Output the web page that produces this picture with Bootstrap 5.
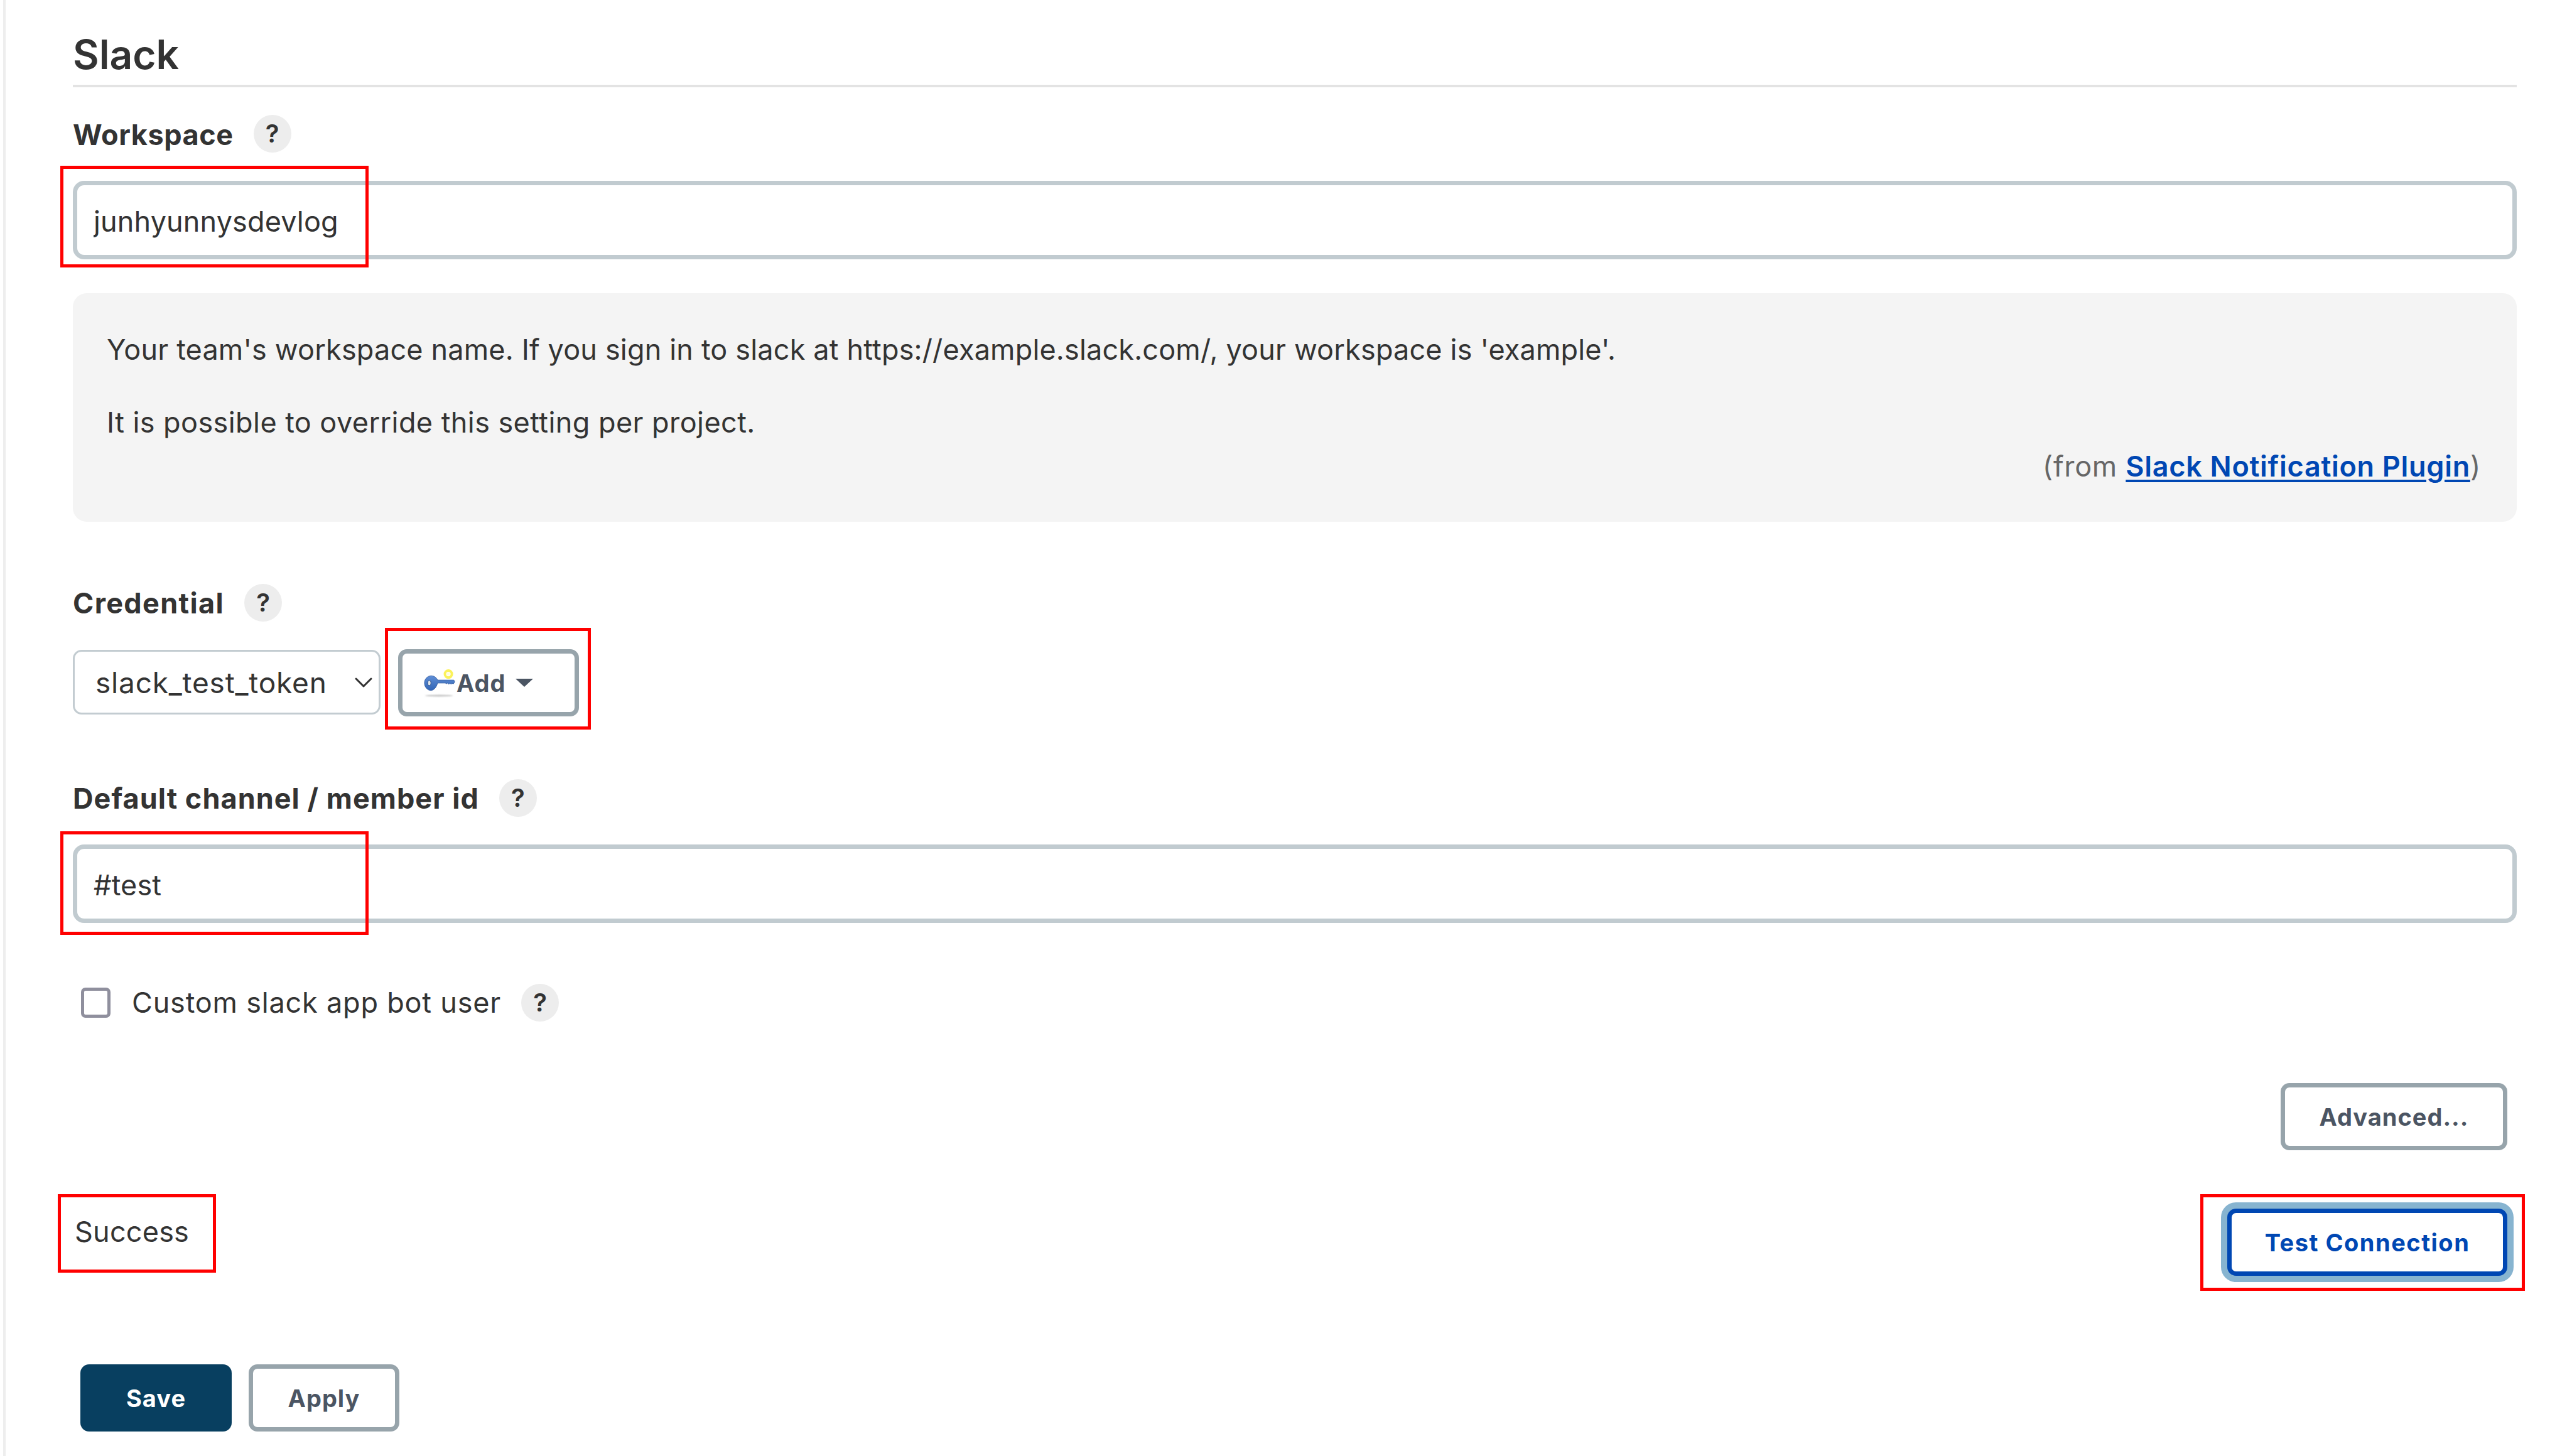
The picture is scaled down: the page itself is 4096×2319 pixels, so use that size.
<!doctype html>
<html lang="en">
<head>
<meta charset="utf-8">
<title>Slack</title>
<link href="https://cdn.jsdelivr.net/npm/bootstrap@5.3.0/dist/css/bootstrap.min.css" rel="stylesheet">
<style>
html,body{height:100%;background:#fff}
body{font-family:Inter,"Liberation Sans",sans-serif;font-size:45px;line-height:60px;color:#333}
.pg{position:relative;min-height:2319px;margin-left:5px;border-left:4px solid #eee;padding:48px 88px 0 107px}
.slack-title{font-size:64px;line-height:78px;font-weight:600;margin:0;padding-bottom:9px;border-bottom:4px solid #e3e3e3;color:#333}
.lbl-row{display:flex;align-items:center;gap:32px;font-weight:700;letter-spacing:.55px}
.lbl-row>span:first-child{padding-top:4px}
.r1{margin-top:42px;margin-bottom:43px}
.r2{margin-top:98px;margin-bottom:43px;letter-spacing:1.35px}
.r3{margin-top:99px;margin-bottom:43px;letter-spacing:1.05px}
.r2>span:first-child,.r3>span:first-child{padding-top:2px}
.qm{flex:none;width:60px;height:60px;border-radius:50%;background:#ededed;display:flex;align-items:center;justify-content:center;font-size:40px;font-weight:600;color:#333;line-height:1;letter-spacing:0}
.tx-in.form-control{height:125px;border:7px solid #c1cbd0;border-radius:18px;font-size:45px;line-height:60px;padding:3px 26px 0;color:#333;box-shadow:none;font-family:inherit;letter-spacing:.15px}
.hlp{margin-top:54px;background:#f4f4f4;border-radius:22px;padding:60px 57px 58px 54px;letter-spacing:.17px}
.hlp p{margin:0 0 56px}
.hlp p.mb-0{letter-spacing:.43px}
.hlp .frm{margin:10px 0 0;text-align:right;color:#666;letter-spacing:.7px}
.hlp a{color:#0047b3;font-weight:600;text-decoration:underline;text-decoration-thickness:4px;text-underline-offset:5px}
.sel-row{display:flex;align-items:flex-start;gap:28px}
.sel-box.form-select{width:490px;height:103px;margin-top:1px;border:3px solid #c3ccd1;border-radius:14px;font-size:46px;line-height:60px;padding:0 40px 0 33px;color:#333;background-image:url("data:image/svg+xml,%3csvg xmlns='http://www.w3.org/2000/svg' viewBox='0 0 16 16'%3e%3cpath fill='none' stroke='%23333' stroke-linecap='round' stroke-linejoin='round' stroke-width='1.5' d='m2 5 6 6 6-6'/%3e%3c/svg%3e");background-size:32px;background-position:right 8px center;font-family:inherit;box-shadow:none;letter-spacing:.8px}
.bt.btn{--bs-btn-font-size:38px;font-weight:700;height:107px;border-radius:14px;border:7px solid #97a4ab;background:#fff;color:#4b5563;padding:0;line-height:1;display:inline-flex;align-items:center;justify-content:center;letter-spacing:1px}
.add-b.btn{width:288px;justify-content:flex-start;padding-left:33px}
.add-b svg{width:52px;height:48px;flex:none;margin-right:1px}
.add-b.dropdown-toggle::after{margin-left:16px;border-top:13px solid #4b5563;border-right:14px solid transparent;border-left:14px solid transparent;border-bottom:0;vertical-align:0}
.chk-row{margin-top:97px;display:flex;align-items:center;padding-left:13px}
.chk-box.form-check-input{width:47px;height:48px;margin:0 34px 0 0;border:5px solid #8f8f9d;border-radius:7px;float:none;flex:none}
.chk-row label{letter-spacing:.8px}
.chk-row .qm{margin-left:32px}
.adv-row{margin-top:98px;display:flex;justify-content:flex-end;padding-right:15px}
.adv-b.btn{width:361px}
.test-row{margin-top:93px;display:flex;justify-content:space-between;align-items:flex-start;padding-right:15px}
.succ{margin:7px 0 0 3px;letter-spacing:.2px}
.test-b.btn{width:446px;border-color:#0047b3;color:#0047b3;box-shadow:0 0 0 10px #87b4d0;letter-spacing:1.5px}
.save-row{margin-top:141px;display:flex;gap:27px;padding-left:12px}
.save-b.btn{width:241px;background:#083f60;border-color:#083f60;color:#fff}
.apply-b.btn{width:240px}
.red{position:absolute;border:5px solid #f00;pointer-events:none}
.red1{left:87px;top:264px;width:491px;height:162px}
.red2{left:604px;top:1000px;width:328px;height:162px}
.red3{left:87px;top:1324px;width:491px;height:165px}
.red4{left:83px;top:1902px;width:252px;height:125px}
.red5{left:3495px;top:1902px;width:517px;height:154px}
</style>
</head>
<body>
<div class="pg">
  <h2 class="slack-title">Slack</h2>
  <div class="lbl-row r1"><span>Workspace</span><span class="qm">?</span></div>
  <input class="form-control tx-in" type="text" value="junhyunnysdevlog" aria-label="Workspace">
  <div class="hlp">
    <p>Your team's workspace name. If you sign in to slack at https://example.slack.com/, your workspace is 'example'.</p>
    <p class="mb-0">It is possible to override this setting per project.</p>
    <div class="frm">(from <a href="#">Slack Notification Plugin</a>)</div>
  </div>
  <div class="lbl-row r2"><span>Credential</span><span class="qm">?</span></div>
  <div class="sel-row">
    <select class="form-select sel-box" aria-label="Credential"><option>slack_test_token</option></select>
    <button type="button" class="btn bt add-b dropdown-toggle">
      <svg viewBox="60 15 165 155" aria-hidden="true">
        <defs>
          <linearGradient id="kg" x1="0" y1="0" x2="0" y2="1"><stop offset="0" stop-color="#5f8ed6"/><stop offset="1" stop-color="#3265b5"/></linearGradient>
          <filter id="bl" x="-20%" y="-100%" width="140%" height="300%"><feGaussianBlur stdDeviation="3"/></filter>
        </defs>
        <ellipse cx="140" cy="157" rx="72" ry="5" fill="#c4c4c4" filter="url(#bl)"/>
        <circle cx="188" cy="46" r="18" fill="none" stroke="#fbf25a" stroke-width="13"/>
        <circle cx="188" cy="46" r="8" fill="#fffde0"/>
        <path d="M100 55c15 0 28 10 32 22h84l4 6-3 10-6 4-4-5-5 6-6-5-6 5-6-6-6 4-6-4h-40c-4 20-18 38-34 38-18 0-33-17-33-38s15-37 35-37z" fill="url(#kg)" stroke="#2f5ba3" stroke-width="3" stroke-linejoin="round"/>
        <ellipse cx="90" cy="92" rx="8" ry="13" fill="#dfe5ea" stroke="#274a85" stroke-width="3"/>
      </svg>Add</button>
  </div>
  <div class="lbl-row r3"><span>Default channel / member id</span><span class="qm">?</span></div>
  <input class="form-control tx-in" type="text" value="#test" aria-label="Default channel">
  <div class="chk-row">
    <input class="form-check-input chk-box" type="checkbox" id="cb" aria-label="Custom slack app bot user">
    <label for="cb">Custom slack app bot user</label>
    <span class="qm">?</span>
  </div>
  <div class="adv-row"><button type="button" class="btn bt adv-b">Advanced...</button></div>
  <div class="test-row">
    <div class="succ">Success</div>
    <button type="button" class="btn bt test-b">Test Connection</button>
  </div>
  <div class="save-row">
    <button type="button" class="btn bt save-b">Save</button>
    <button type="button" class="btn bt apply-b">Apply</button>
  </div>
  <div class="red red1"></div>
  <div class="red red2"></div>
  <div class="red red3"></div>
  <div class="red red4"></div>
  <div class="red red5"></div>
</div>
<script src="https://cdn.jsdelivr.net/npm/bootstrap@5.3.0/dist/js/bootstrap.bundle.min.js"></script>
</body>
</html>
